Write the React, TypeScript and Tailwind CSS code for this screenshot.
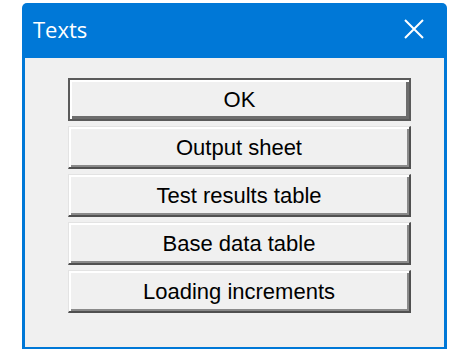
const items = ["Output sheet", "Test results table", "Base data table", "Loading increments"];

export default function App() {
  return (
    <div className="w-[468px] h-[361px] bg-white pt-[3px] pl-[22px]" style={{ fontFamily: '"Liberation Sans", Arial, sans-serif' }}>
      <div className="w-[425px] h-[346px] flex flex-col bg-[#0078d7] rounded-t-[5px] px-[3px] pb-[2px]">
        {/* title bar */}
        <div className="h-[55px] shrink-0 flex items-center justify-between pl-[8px] pr-[20px] text-white">
          <span className="text-[22px] leading-none pb-[4px]" style={{ fontFamily: '"Open Sans", "Liberation Sans", sans-serif' }}>Texts</span>
          <svg width="20" height="20" viewBox="0 0 20 20" className="mb-[3px]">
            <path d="M1 1 L19 19 M19 1 L1 19" stroke="#ffffff" strokeWidth="2" />
          </svg>
        </div>
        {/* client */}
        <div className="flex-1 bg-[#f0f0f0] flex flex-col gap-[5px] pt-[20px] pl-[43px] pr-[33px]">
          <button className="h-[43px] w-[343px] border-2 border-[#5a5a5a] bg-[#f0f0f0] text-[22px] text-black shadow-[inset_2px_2px_0_#ffffff,inset_-3px_-3px_0_#6d6d6d]">
            OK
          </button>
          {items.map((t) => (
            <button
              key={t}
              className="h-[43px] w-[343px] border-t border-l border-[#e3e3e3] border-r-2 border-b-2 border-r-[#505050] border-b-[#505050] bg-[#f0f0f0] text-[22px] text-black shadow-[inset_2px_2px_0_#ffffff,inset_-2px_-2px_0_#8a8a8a]"
            >
              {t}
            </button>
          ))}
        </div>
      </div>
    </div>
  );
}
